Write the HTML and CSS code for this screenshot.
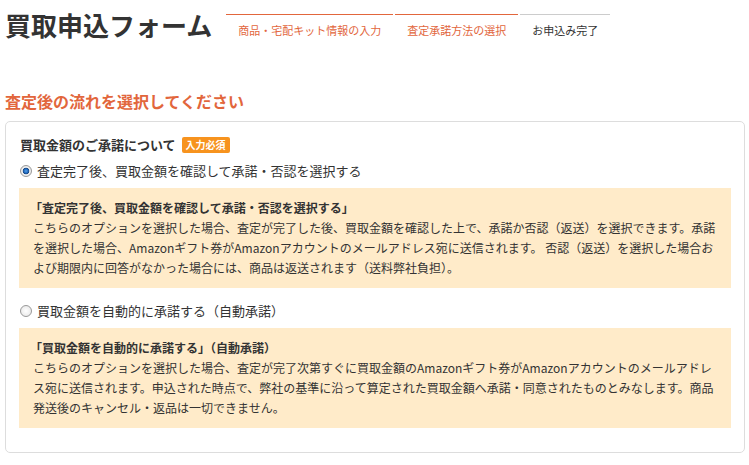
FILE: index.html
```html
<!DOCTYPE html>
<html lang="ja">

<head>
    <meta charset="UTF-8" />
    <meta name="viewport" content="width=device-width, initial-scale=1.0" />
    <title>買取申込フォーム</title>
    <link rel="stylesheet" href="styles.css">
</head>

<body>
    <div class="form-header">
        <h1 class="form-title">買取申込フォーム</h1>
        <ol class="steps">
            <li class="step is-done">商品・宅配キット情報の入力</li>
            <li class="step is-done">査定承諾方法の選択</li>
            <li class="step">お申込み完了</li>
        </ol>
    </div>

    <h2 class="section-heading">査定後の流れを選択してください</h2>

    <div class="form-box">
        <div class="field-label">
            買取金額のご承諾について <span class="badge-required">入力必須</span>
        </div>

        <div class="option">
            <label class="option-label">
                <input type="radio" name="approval" class="radio" checked>
                査定完了後、買取金額を確認して承諾・否認を選択する
            </label>
            <div class="option-note">
                <p class="note-title">「査定完了後、買取金額を確認して承諾・否認を選択する」</p>
                <p class="note-text">こちらのオプションを選択した場合、査定が完了した後、買取金額を確認した上で、承諾か否認（返送）を選択できます。承諾を選択した場合、Amazonギフト券がAmazonアカウントのメールアドレス宛に送信されます。 否認（返送）を選択した場合および期限内に回答がなかった場合には、商品は返送されます（送料弊社負担）。</p>
            </div>
        </div>

        <div class="option option-second">
            <label class="option-label">
                <input type="radio" name="approval" class="radio">
                買取金額を自動的に承諾する（自動承諾）
            </label>
            <div class="option-note">
                <p class="note-title">「買取金額を自動的に承諾する」（自動承諾）</p>
                <p class="note-text">こちらのオプションを選択した場合、査定が完了次第すぐに買取金額のAmazonギフト券がAmazonアカウントのメールアドレス宛に送信されます。申込された時点で、弊社の基準に沿って算定された買取金額へ承諾・同意されたものとみなします。商品発送後のキャンセル・返品は一切できません。</p>
            </div>
        </div>
    </div>
</body>

</html>
```

FILE: styles.css
```css
* {
    box-sizing: border-box;
}

body {
    margin: 0;
    padding: 0 4px 0 5px;
    font-family: "Noto Sans CJK JP", "Noto Sans", sans-serif;
    color: #333;
    background-color: #fff;
}

.form-header {
    display: flex;
    align-items: flex-start;
    padding-top: 14px;
}

.form-title {
    margin: -9px 0 0 0;
    font-size: 26px;
    line-height: 40px;
    font-weight: bold;
    color: #333;
}

.steps {
    display: flex;
    gap: 2px;
    margin: 0 0 0 14px;
    padding: 0;
    list-style: none;
}

.step {
    border-top: 1px solid #ccc;
    padding: 7px 12px 0;
    font-size: 11px;
    line-height: 16px;
    color: #333;
}

.step.is-done {
    border-top-color: #e2663c;
    color: #e2663c;
}

.section-heading {
    margin: 44px 0 0 0;
    font-size: 16px;
    line-height: 24px;
    font-weight: bold;
    color: #e2663c;
}

.form-box {
    margin-top: 8px;
    border: 1px solid #ddd;
    border-radius: 5px;
    padding: 13px 13px 24px;
}

.field-label {
    font-size: 13px;
    line-height: 20px;
    font-weight: bold;
    padding-left: 1px;
}

.badge-required {
    display: inline-block;
    margin-left: 3px;
    padding: 0 4px;
    background-color: #f7931e;
    color: #fff;
    font-size: 10px;
    line-height: 16px;
    border-radius: 2px;
    vertical-align: 1px;
}

.option {
    margin-top: 5px;
}

.option-second {
    margin-top: 12px;
}

.option-label {
    display: flex;
    align-items: center;
    font-size: 13px;
    line-height: 22px;
    cursor: pointer;
}

.radio {
    appearance: none;
    -webkit-appearance: none;
    width: 12px;
    height: 12px;
    margin: 0 5px 0 1px;
    border-radius: 50%;
    border: 1px solid #999;
    background: radial-gradient(circle, #fff 0%, #e4e4e4 100%);
}

.radio:checked {
    background: radial-gradient(circle, #5aa0e0 0, #1f6bc4 2px, #1a3f70 3.2px, #f4f4f4 3.6px, #d8d8d8 100%);
}

.option-note {
    margin-top: 6px;
    background-color: #ffebc9;
    padding: 10px 14px;
    font-size: 12px;
    line-height: 20px;
    color: #333;
}

.note-title {
    margin: 0;
    font-weight: bold;
    margin-left: -3px;
}

.note-text {
    margin: 0;
}
```
